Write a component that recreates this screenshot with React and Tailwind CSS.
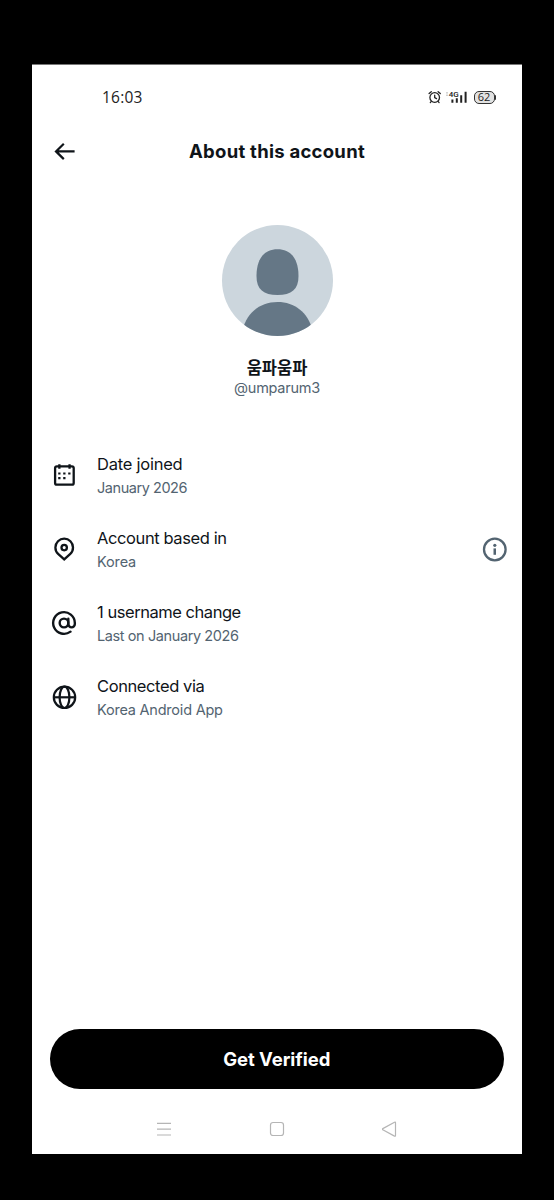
import { AtSign } from 'lucide-react';

function AlarmIcon() {
  return (
    <svg width="14" height="14" viewBox="0 0 14 14" fill="none" stroke="#222" strokeWidth="1.3" strokeLinecap="round">
      <circle cx="6.7" cy="7.5" r="4.8" />
      <path d="M1.1 3.6 3.3 1.7M12.3 3.6l-2.2-1.9M3.3 11.4l-1 1.2M10.1 11.4l1 1.2M6.7 5.2v2.5l1.8.9" />
    </svg>
  );
}

function SignalIcon() {
  return (
    <svg width="24" height="16" viewBox="0 0 24 16">
      <path d="M0 3.9h2M0 6.2h2" stroke="#bbb" strokeWidth="1" />
      <text x="2.8" y="7.8" className="font-['Roboto',sans-serif] font-medium" fontSize="8" fill="#222">4G</text>
      <path d="M6.4 10.6v3.2M10.8 9.3v4.5M15.2 6.3v7.5M19.6 2.8v11" stroke="#222" strokeWidth="2" />
    </svg>
  );
}

function BatteryIcon() {
  return (
    <div className="flex items-center">
      <div className="flex h-[13px] w-[21px] items-center justify-center rounded-[5px] border-[1.5px] border-[#333] bg-[#e2e2e2] font-['Open_Sans',sans-serif] text-[11px] leading-none text-[#222]">
        <span className="-mt-px">62</span>
      </div>
      <div className="h-[5px] w-[1.5px] rounded-r-sm bg-[#333]" />
    </div>
  );
}

function BackIcon() {
  return (
    <svg width="22" height="20" viewBox="0 0 22 20" fill="none" stroke="#0f1419" strokeWidth="2.2">
      <path d="M20.6 9.4H2M9.8 1.7 2 9.4l7.8 7.7" />
    </svg>
  );
}

function Avatar() {
  return (
    <div className="size-[111px] overflow-hidden rounded-full bg-[#ccd6dd]">
      <svg width="111" height="111" viewBox="0 0 111 111" fill="#657786">
        <path d="M55.5 24.2C69 24.2 76.5 34 76.5 51C76.5 64.5 69.5 70 55.5 70S34.5 64.5 34.5 51C34.5 34 42 24.2 55.5 24.2Z" />
        <path d="M20.5 104.5C25.5 87.5 38 77 55.5 77S85.5 87.5 90.5 104.5V112H20.5Z" />
      </svg>
    </div>
  );
}

function CalendarIcon() {
  return (
    <svg width="28" height="28" viewBox="0 0 28 28" fill="#0f1419">
      <rect x="5.1" y="5.3" width="18.6" height="18.4" rx="1.8" fill="none" stroke="#0f1419" strokeWidth="2.3" />
      <path d="M8.2 3.2h2.3v4.6H8.2zM18.4 3.2h2.3v4.6h-2.3z" />
      <path d="M8.2 11.4h2.3v2.2H8.2zM13.2 11.4h2.3v2.2h-2.3zM18.2 11.4h2.3v2.2h-2.3zM8.2 16h2.3v2.2H8.2zM13.2 16h2.3v2.2h-2.3z" />
    </svg>
  );
}

function PinIcon() {
  return (
    <svg width="28" height="28" viewBox="0 0 28 28" fill="none" stroke="#0f1419" strokeWidth="2.3">
      <path d="M14.2 24.4 8.1 18.9C6.2 17.2 5.4 15.1 5.4 12.5a8.8 8.8 0 0 1 17.6 0c0 2.6-.8 4.7-2.7 6.4Z" />
      <circle cx="14.2" cy="12.6" r="2.7" />
    </svg>
  );
}

function GlobeIcon() {
  return (
    <svg width="28" height="28" viewBox="0 0 28 28" fill="none" stroke="#0f1419" strokeWidth="2.2">
      <circle cx="14.5" cy="14.3" r="10.7" />
      <ellipse cx="14.5" cy="14.3" rx="4.9" ry="10.7" />
      <path d="M3.8 14.3h21.4" />
    </svg>
  );
}

function InfoIcon() {
  return (
    <svg width="26" height="26" viewBox="0 0 26 26" fill="#536471">
      <circle cx="12.8" cy="13.5" r="10.8" fill="none" stroke="#536471" strokeWidth="2.3" />
      <circle cx="12.8" cy="9.3" r="1.6" />
      <path d="M11.5 12.4h2.5v6.4h-2.5z" />
    </svg>
  );
}

const details = [
  { title: 'Date joined', value: 'January 2026', icon: <CalendarIcon />, titleClass: 'tracking-[-0.24px]', valueClass: 'tracking-[-0.45px]' },
  { title: 'Account based in', value: 'Korea', icon: <PinIcon />, info: true, titleClass: 'tracking-[-0.4px]', valueClass: 'tracking-[-0.15px]' },
  { title: '1 username change', value: 'Last on January 2026', icon: <AtSign size={26} color="#0f1419" strokeWidth={2.2} />, titleClass: 'tracking-[-0.46px]', valueClass: 'tracking-[-0.4px]' },
  { title: 'Connected via', value: 'Korea Android App', icon: <GlobeIcon />, titleClass: 'tracking-[-0.4px]', valueClass: 'tracking-[-0.22px]' },
];

export default function App() {
  return (
    <div className="h-[1200px] w-[554px] bg-black px-8 pt-16 font-['Inter','Noto_Sans_CJK_KR',sans-serif] text-[#0f1419]">
      <main className="flex h-[1090px] w-[490px] flex-col border-t border-[#777] bg-white">
        <div className="flex h-[66px] items-center justify-between pr-[26px] pl-[70px]">
          <span className="font-['Open_Sans',sans-serif] text-[15.5px] leading-none tracking-[0.2px] text-[#222]">16:03</span>
          <div className="flex items-center gap-1 pb-[2px]">
            <AlarmIcon />
            <SignalIcon />
            <BatteryIcon />
          </div>
        </div>

        <header className="grid h-[42px] grid-cols-[46px_1fr_46px] items-center">
          <div className="pl-[22px]">
            <BackIcon />
          </div>
          <h1 className="text-center text-[18.5px] font-bold tracking-[0.26px]">About this account</h1>
        </header>

        <section className="flex flex-col items-center pt-[52px]">
          <Avatar />
          <h2 className="mt-[21px] text-[16.5px] leading-[22px] font-bold">움파움파</h2>
          <p className="text-[14.5px] leading-[18px] tracking-[-0.25px] text-[#536471]">@umparum3</p>
        </section>

        <section className="mt-[41px] flex flex-col">
          {details.map((item) => (
            <div key={item.title} className="flex h-[74px] items-center pr-[14px] pl-[18px]">
              <div className="flex w-7 shrink-0 items-center justify-center">{item.icon}</div>
              <div className="ml-[19px] flex-1">
                <p className={`text-[16.5px] leading-6 ${item.titleClass}`}>{item.title}</p>
                <p className={`text-[14.5px] leading-[23px] text-[#536471] ${item.valueClass}`}>{item.value}</p>
              </div>
              {item.info && <InfoIcon />}
            </div>
          ))}
        </section>

        <div className="mt-auto pr-[18.5px] pl-[18px]">
          <button className="h-[60px] w-full rounded-full bg-black pt-[2px] text-[18.5px] font-bold tracking-[-0.05px] text-white">
            Get Verified
          </button>
        </div>

        <nav className="flex h-[65px] items-center justify-between px-[124px] pt-[15px] pb-[1px]">
          <svg width="16" height="16" viewBox="0 0 16 16" stroke="#b5b5b5" strokeWidth="1.2">
            <path d="M1 2.3h14M1 8.2h14M1 14h14" />
          </svg>
          <svg width="16" height="16" viewBox="0 0 16 16" fill="none" stroke="#b5b5b5" strokeWidth="1.2">
            <rect x="1.5" y="1.5" width="13" height="13" rx="2.5" />
          </svg>
          <svg width="16" height="16" viewBox="0 0 16 16" fill="none" stroke="#b5b5b5" strokeWidth="1.2" strokeLinejoin="round">
            <path d="M13.5 1.7v12.9q0 1-1 .5L.8 8.8q-.9-.6 0-1.2L12.5 1.2q1-.5 1 .5Z" />
          </svg>
        </nav>
      </main>
    </div>
  );
}
